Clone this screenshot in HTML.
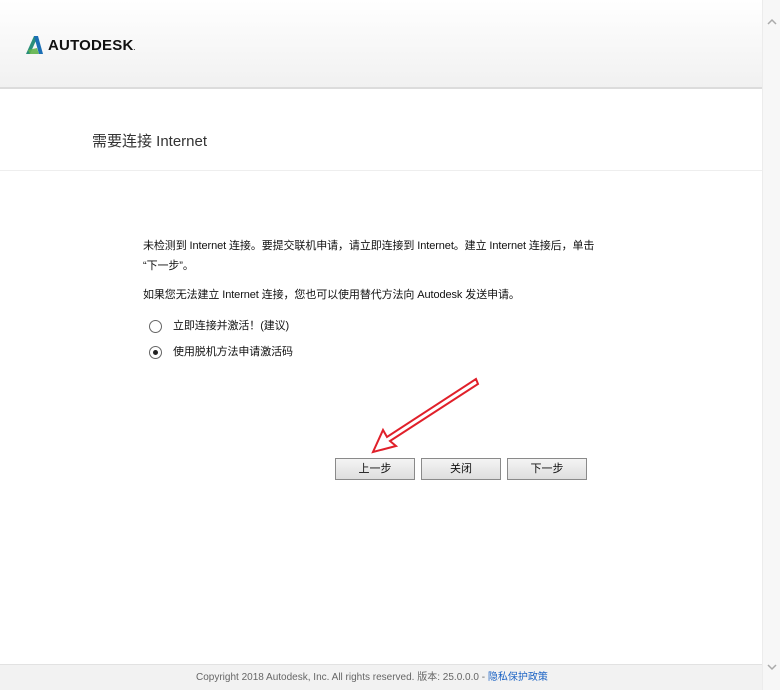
<!DOCTYPE html>
<html><head><meta charset="utf-8"><style>
*{margin:0;padding:0;box-sizing:border-box}
body{width:780px;height:690px;overflow:hidden;background:#fff;font-family:"Liberation Sans","Noto Sans CJK SC",sans-serif;position:relative;color:#222}
.hdr{position:absolute;left:0;top:0;width:762px;height:89px;background:linear-gradient(#fff,#f1f1f1);border-bottom:2px solid #dcdcdc}
.logo{position:absolute;left:24px;top:35px;display:flex;align-items:center}
.logo span{font-size:15px;font-weight:bold;letter-spacing:0.2px;margin-left:4px;color:#111}
.title{position:absolute;left:92px;top:130px;font-size:15px;color:#333}
.sep{position:absolute;left:0;top:170px;width:762px;border-top:1px solid #eee}
.t{position:absolute;left:143px;font-size:11px;color:#111;letter-spacing:-0.1px}
.radio{position:absolute;left:149px;width:13px;height:13px;border:1px solid #666;border-radius:50%;background:#fff}
.radio.on::after{content:"";position:absolute;left:3px;top:3px;width:5px;height:5px;border-radius:50%;background:#222}
.btn{position:absolute;top:458px;width:80px;height:22px;border:1px solid #8a8a8a;background:linear-gradient(#f4f4f4,#dedede);font-size:11px;text-align:center;line-height:20px;color:#111}
.foot{position:absolute;left:0;top:664px;width:762px;height:26px;background:#f2f2f2;border-top:1px solid #e2e2e2;font-size:10px;color:#666;padding-left:196px;line-height:25px}
.foot a{color:#1a62c4;text-decoration:none}
.sb{position:absolute;left:762px;top:0;width:18px;height:690px;background:#f7f7f7;border-left:1px solid #ececec}
</style></head><body>
<div class="hdr"><div class="logo">
<svg width="20" height="20" viewBox="0 0 20 20"><polygon points="2,19 10,1 14,1 6,19" fill="#2a8f7a"/><polygon points="10,1 14,1 19,19 15,19" fill="#1b6fb5"/><polygon points="4,15 13,13 15,19 6,19" fill="#5fb24a" opacity=".9"/></svg>
<span>AUTODESK<small style="font-size:6px">.</small></span></div></div>
<div class="title">需要连接 Internet</div>
<div class="sep"></div>
<div class="t" style="top:237px">未检测到 Internet 连接。要提交联机申请，请立即连接到 Internet。建立 Internet 连接后，单击</div>
<div class="t" style="top:257px">“下一步”。</div>
<div class="t" style="top:286px">如果您无法建立 Internet 连接，您也可以使用替代方法向 Autodesk 发送申请。</div>
<div class="radio" style="top:320px"></div><div class="t" style="left:173px;top:317px">立即连接并激活！(建议)</div>
<div class="radio on" style="top:346px"></div><div class="t" style="left:173px;top:343px">使用脱机方法申请激活码</div>
<svg style="position:absolute;left:0;top:0" width="780" height="690"><g fill="none" stroke="#e0202a" stroke-width="2"><path d="M476 379 L387 437 L383 430 L373 452 L396 446 L390 441 L478 384 Z"/></g></svg>
<div class="btn" style="left:335px">上一步</div>
<div class="btn" style="left:421px">关闭</div>
<div class="btn" style="left:507px">下一步</div>
<div class="foot">Copyright 2018 Autodesk, Inc. All rights reserved. 版本: 25.0.0.0 - <a>隐私保护政策</a></div>
<div class="sb"><svg width="18" height="690"><path d="M5 24 L9 20 L13 24" stroke="#aaa" fill="none" stroke-width="1.5"/><path d="M5 665 L9 669 L13 665" stroke="#aaa" fill="none" stroke-width="1.5"/></svg></div>
</body></html>
